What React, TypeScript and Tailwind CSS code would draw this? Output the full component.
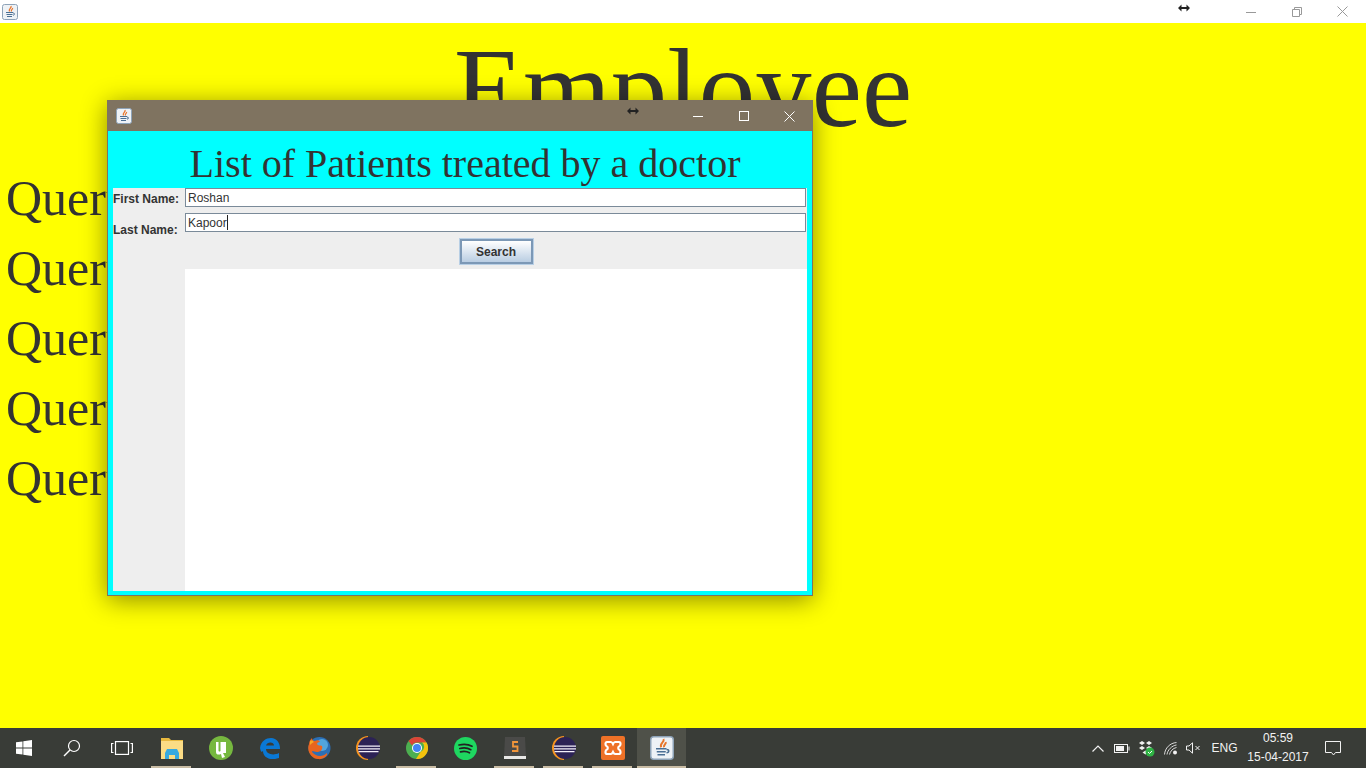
const JavaIcon = ({ size = 16 }: { size?: number }) => (
  <svg width={size} height={size} viewBox="0 0 16 16">
    <rect x="0.5" y="0.5" width="15" height="15" rx="2" fill="#eef2f6" stroke="#8ea3b8" />
    <path d="M9 2c1 2-3 3-1.500 5.500M10.500 4c.5 1.500-2 2-1 3.500" fill="none" stroke="#e8762c" strokeWidth="1.300" />
    <path d="M4 8.500h7M4.500 10.500h6M5 12.500h5" stroke="#4a6f94" strokeWidth="1.100" />
    <path d="M11 9c2 0 2 2 0 2.200" fill="none" stroke="#4a6f94" />
  </svg>
);

const ResizeCursor = ({ size = 12 }: { size?: number }) => (
  <svg width={size} height="8" viewBox="0 0 12 8">
    <path d="M0 4l3.500-3.500v2.500h5V.5L12 4 8.500 7.500V5h-5v2.500z" fill="#222" />
  </svg>
);

const Explorer = () => (
  <svg width="22" height="22" viewBox="0 0 22 22">
    <path d="M0 1h8l2 2h12v4H0z" fill="#e8b93f" />
    <path d="M0 4h22v18H0z" fill="#fbdc85" />
    <path d="M4 16l2-4h10l2 4v6h-4v-4H8v4H4z" fill="#37a9e0" />
    <path d="M8 18h6v4H8z" fill="#fbdc85" />
  </svg>
);

const UTorrent = () => (
  <svg width="24" height="24" viewBox="0 0 24 24">
    <circle cx="12" cy="12" r="12" fill="#76b83f" />
    <path d="M7 6v10c0 3 3 3 5 2l1 4 3-1-2-4V6h-2.500v9c-1 1-2 .5-2-.5V6zM14 6h3v11h-3z" fill="#fff" />
  </svg>
);

const Edge = () => (
  <svg width="22" height="22" viewBox="0 0 22 22">
    <path d="M1 11C2 4 7 1 12 1c6 0 9 5 9 11H7c0 5 7 7 13 4v5c-8 3-16 0-16-7-1 1-2 2-3-3zM7 8.500h8c0-4-7-4-8 0z" fill="#0a78d4" fillRule="evenodd" />
  </svg>
);

const Firefox = () => (
  <svg width="24" height="24" viewBox="0 0 24 24">
    <circle cx="12.500" cy="12" r="11" fill="#2b6fb5" />
    <circle cx="15" cy="9" r="6" fill="#52a5dc" />
    <path d="M2 8c0-3 2-5 3-6 0 2 1 3 3 3 2-1 4-1 5 1-2 0-3 1-3 2 1 2 3 1 5 2 1 3-1 6-5 6-3 0-5-2-5 0 3 4 10 6 15 1 1 3-4 7-9 6C5 23-1 15 2 8z" fill="#e8651f" />
    <path d="M3 5c2-1 3 0 4 1-2 1-3 2-4 3z" fill="#f6a723" />
  </svg>
);

const Eclipse = () => (
  <svg width="24" height="24" viewBox="0 0 24 24">
    <path d="M12 0a12 12 0 0 0 0 24z" fill="#f7941e" />
    <circle cx="13" cy="12" r="11" fill="#2c2255" />
    <path d="M2 9.500h22v1.300H2zM2 12.200h22v1.300H2zM2.500 15h20v1.300h-20z" fill="#f4f0fa" />
  </svg>
);

const Chrome = () => (
  <svg width="22" height="22" viewBox="0 0 22 22">
    <circle cx="11" cy="11" r="11" fill="#4caf50" />
    <path d="M11 0a11 11 0 0 1 9.500 5.500H11a5.500 5.500 0 0 0-5 3L2.500 4A11 11 0 0 1 11 0z" fill="#db4437" />
    <path d="M20.500 5.500A11 11 0 0 1 10 22l4.500-7a5.500 5.500 0 0 0 1.500-9.500z" fill="#f4c20d" />
    <circle cx="11" cy="11" r="5" fill="#fff" />
    <circle cx="11" cy="11" r="4" fill="#4285f4" />
  </svg>
);

const Spotify = () => (
  <svg width="23" height="23" viewBox="0 0 23 23">
    <circle cx="11.500" cy="11.500" r="11.500" fill="#1ed760" />
    <path d="M5 8c4-1 9-1 13 1.300M5.800 11.500c3.500-.8 8-.6 11 1.200M6.500 14.800c3-.6 6.500-.5 9 1" fill="none" stroke="#222" strokeWidth="1.700" strokeLinecap="round" />
  </svg>
);

const Sublime = () => (
  <svg width="24" height="24" viewBox="0 0 24 24">
    <path d="M2 1h20l1 20H1z" fill="#4a4a48" />
    <path d="M1 20h22v3H1z" fill="#e8e8e6" />
    <path d="M15 6H10v4.500h4.500V15H9" fill="none" stroke="#f2963a" strokeWidth="1.800" />
  </svg>
);

const Xampp = () => (
  <svg width="24" height="24" viewBox="0 0 24 24">
    <rect width="24" height="24" rx="2" fill="#ee7127" />
    <path d="M6 6h4c1 0 1.500 1 2 2 .5-1 1-2 2-2h4c2 0 2 4 0 4.500-1 .5-1 2.500 0 3 2 .5 2 4.500 0 4.500h-4c-1 0-1.500-1-2-2-.5 1-1 2-2 2H6c-2 0-2-4 0-4.500 1-.5 1-2.500 0-3C4 10 4 6 6 6z" fill="none" stroke="#fff" strokeWidth="2.200" />
  </svg>
);

const apps = [
  { icon: <Explorer />, line: true },
  { icon: <UTorrent />, line: false },
  { icon: <Edge />, line: false },
  { icon: <Firefox />, line: false },
  { icon: <Eclipse />, line: false },
  { icon: <Chrome />, line: true },
  { icon: <Spotify />, line: false },
  { icon: <Sublime />, line: true },
  { icon: <Eclipse />, line: true },
  { icon: <Xampp />, line: true },
];

const Taskbar = () => (
  <footer className="h-10 flex items-center bg-[#393c37] text-[#f2f2f2] font-['Liberation_Sans',sans-serif]">
    <div className="w-12 h-10 flex items-center justify-center">
      <svg width="16" height="16" viewBox="0 0 16 16" fill="#fff">
        <path d="M0 2.300l6.500-.9v6.200H0zM7.300 1.300L16 0v7.600H7.300zM0 8.400h6.500v6.200L0 13.700zM7.300 8.400H16V16l-8.700-1.300z" />
      </svg>
    </div>
    <div className="w-12 h-10 flex items-center justify-center">
      <svg width="18" height="18" viewBox="0 0 18 18" fill="none" stroke="#fff" strokeWidth="1.200">
        <circle cx="11" cy="7" r="5.500" />
        <path d="M7 11l-6 6" strokeWidth="1.500" />
      </svg>
    </div>
    <div className="w-[51px] h-10 flex items-center justify-center">
      <svg width="22" height="14" viewBox="0 0 22 14" fill="none" stroke="#fff" strokeWidth="1.200">
        <rect x="4.500" y="0.600" width="13" height="12.800" />
        <path d="M2.500 2.500H.6v9h1.900M19.500 2.500h1.900v9h-1.900" />
      </svg>
    </div>
    {apps.map((app, i) => (
      <div key={i} className="relative w-[49px] h-10 flex items-center justify-center">
        {app.icon}
        {app.line && <div className="absolute bottom-0 left-1 right-[5px] h-[2px] bg-[#c9bca4]"></div>}
      </div>
    ))}
    <div className="relative w-[49px] h-10 flex items-center justify-center bg-[#4f5149]">
      <JavaIcon size={24} />
      <div className="absolute bottom-0 left-0 right-0 h-[2px] bg-[#c9bca4]"></div>
    </div>
    <div className="flex-1"></div>
    <div className="w-6 flex justify-center">
      <svg width="12" height="7" viewBox="0 0 12 7" fill="none" stroke="#f2f2f2" strokeWidth="1.200">
        <path d="M.5 6.500L6 1l5.500 5.500" />
      </svg>
    </div>
    <div className="w-6 flex justify-center">
      <svg width="16" height="9" viewBox="0 0 16 9" fill="none" stroke="#f2f2f2">
        <rect x="0.500" y="0.500" width="13" height="8" />
        <rect x="2" y="2" width="8" height="5" fill="#f2f2f2" stroke="none" />
        <path d="M15 2.500v4" />
      </svg>
    </div>
    <div className="w-6 flex justify-center">
      <svg width="17" height="17" viewBox="0 0 17 17">
        <path d="M4 1l3 2-3 2-3-2zM11 1l3 2-3 2-3-2zM4 6l3 2-3 2-3-2zM11 6l3 2-3 2-3-2zM7.500 10.500l2.500 2-2.500 2-3-2z" fill="#f2f2f2" />
        <circle cx="12" cy="12" r="4.500" fill="#2fb344" />
        <path d="M10 12l1.500 1.500L14 11" fill="none" stroke="#fff" />
      </svg>
    </div>
    <div className="w-[25px] flex justify-center">
      <svg width="14" height="13" viewBox="0 0 14 13" fill="none" stroke="#d8d8d8">
        <path d="M.5 12.500C1 6 6 1 12.500.5M3 12.500C3.500 8 8 3.500 12.500 3M5.500 12.500C6 9.500 9 6 12.500 5.500" />
        <circle cx="11" cy="10.500" r="2" fill="#f2f2f2" stroke="none" />
      </svg>
    </div>
    <div className="w-[21px] flex justify-center">
      <svg width="15" height="12" viewBox="0 0 15 12" fill="none" stroke="#f2f2f2">
        <path d="M.5 4h2.500L6.500.8v10.400L3 8H.5zM9.500 4l4 4M13.500 4l-4 4" />
      </svg>
    </div>
    <div className="w-[41px] text-center text-xs">ENG</div>
    <div className="w-[66px] text-center text-xs leading-[19px]">
      <div>05:59</div>
      <div>15-04-2017</div>
    </div>
    <div className="w-[44px] flex justify-center">
      <svg width="16" height="15" viewBox="0 0 16 15" fill="none" stroke="#f2f2f2">
        <path d="M.5.500h15v11h-5l-2 2.500-2-2.500h-6z" />
      </svg>
    </div>
    <div className="w-[11px]"></div>
  </footer>
);

const PatientsWindow = () => (
  <div className="absolute left-[107px] top-[77px] w-[706px] h-[496px] flex flex-col border border-[#7f7360] shadow-[0_4px_24px_rgba(0,0,0,0.45)]">
    <div className="h-[30px] shrink-0 flex items-center pl-2 bg-[#7f7360] relative">
      <JavaIcon />
      <div className="flex-1"></div>
      <div className="absolute left-[519px] top-[6px] flex"><ResizeCursor /></div>
      <div className="w-[46px] flex justify-center">
        <svg width="10" height="10" viewBox="0 0 10 10" stroke="#fff"><path d="M0 5.500h10" /></svg>
      </div>
      <div className="w-[45px] flex justify-center">
        <svg width="10" height="10" viewBox="0 0 10 10" fill="none" stroke="#fff"><rect x="0.500" y="0.500" width="9" height="9" /></svg>
      </div>
      <div className="w-[46px] flex justify-center">
        <svg width="11" height="11" viewBox="0 0 11 11" stroke="#fff"><path d="M.5.500l10 10M10.500.500l-10 10" /></svg>
      </div>
    </div>
    <div className="flex-1 flex flex-col bg-[#00ffff] px-[5px] pb-[4px]">
      <h2 className="h-[57px] shrink-0 pt-[9px] pl-[10px] text-center text-[40px] leading-[48px] text-[#333] font-normal font-['Liberation_Serif',serif]">
        List of Patients treated by a doctor
      </h2>
      <div className="flex-1 grid grid-cols-[72px_1fr] grid-rows-[19px_25px_37px_1fr] bg-[#eeeeee] text-xs text-[#333] font-['Liberation_Sans',sans-serif]">
        <label className="font-bold leading-[22px]">First Name:</label>
        <input
          readOnly
          value="Roshan"
          className="mr-px h-[19px] px-[2px] border border-[#7a8a99] bg-white outline-none"
        />
        <label className="font-bold leading-[47px] h-[25px]">Last Name:</label>
        <div className="pt-[6px]">
          <div className="mr-px h-[19px] px-[2px] flex items-center border border-[#7a8a99] bg-white">
            Kapoor<span className="w-px h-[15px] bg-[#222]"></span>
          </div>
        </div>
        <div></div>
        <div className="flex justify-center pt-[7px]">
          <button className="w-[73px] h-[25px] border-2 border-[#7c98b6] outline outline-1 outline-[#b8cfe5] -outline-offset-0 bg-gradient-to-b from-white to-[#b9cde2] font-bold">
            Search
          </button>
        </div>
        <div></div>
        <div className="bg-white"></div>
      </div>
    </div>
  </div>
);

export default function App() {
  return (
    <div className="h-screen flex flex-col overflow-hidden">
      <header className="h-[23px] shrink-0 flex items-center bg-white relative">
        <div className="pl-[2px]"><JavaIcon /></div>
        <div className="flex-1"></div>
        <div className="absolute left-[1178px] top-[4px] flex"><ResizeCursor /></div>
        <div className="w-[46px] flex justify-center">
          <svg width="10" height="10" viewBox="0 0 10 10" stroke="#999"><path d="M0 5.500h10" /></svg>
        </div>
        <div className="w-[45px] flex justify-center">
          <svg width="10" height="10" viewBox="0 0 10 10" fill="none" stroke="#999">
            <path d="M.5 2.500h7v7h-7zM2.500 2.500v-2h7v7h-2" />
          </svg>
        </div>
        <div className="w-[47px] flex justify-center">
          <svg width="11" height="11" viewBox="0 0 11 11" stroke="#999"><path d="M.5.500l10 10M10.500.500l-10 10" /></svg>
        </div>
      </header>
      <main className="relative flex-1 bg-[#ffff00] text-[#333] font-['Liberation_Serif',serif]">
        <h1 className="h-[140px] text-center text-[113px] leading-[130px] font-normal">Employee</h1>
        <div className="pl-[6px] flex flex-col text-[50px] leading-[70px]">
          <div>Query 1</div>
          <div>Query 2</div>
          <div>Query 3</div>
          <div>Query 4</div>
          <div>Query 5</div>
        </div>
        <PatientsWindow />
      </main>
      <Taskbar />
    </div>
  );
}
